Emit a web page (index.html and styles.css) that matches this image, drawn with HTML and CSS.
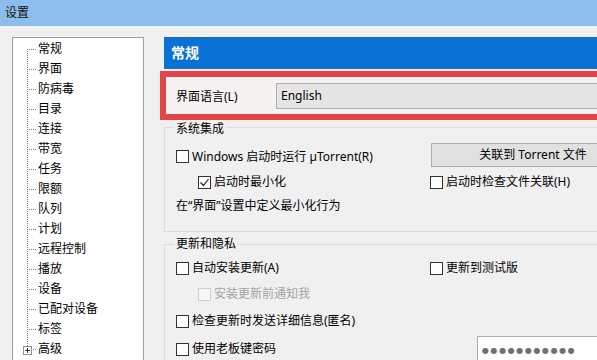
FILE: index.html
```html
<!DOCTYPE html>
<html lang="zh-CN">
<head>
    <meta charset="UTF-8">
    <meta name="viewport" content="width=device-width, initial-scale=1.0">
    <title>设置</title>
    <link rel="stylesheet" href="styles.css">
</head>
<body>
    <div class="titlebar">设置</div>

    <div class="main">
        <ul class="tree">
            <li class="first"><span class="branch"></span>常规</li>
            <li><span class="branch"></span>界面</li>
            <li><span class="branch"></span>防病毒</li>
            <li><span class="branch"></span>目录</li>
            <li><span class="branch"></span>连接</li>
            <li><span class="branch"></span>带宽</li>
            <li><span class="branch"></span>任务</li>
            <li><span class="branch"></span>限额</li>
            <li><span class="branch"></span>队列</li>
            <li><span class="branch"></span>计划</li>
            <li><span class="branch"></span>远程控制</li>
            <li><span class="branch"></span>播放</li>
            <li><span class="branch"></span>设备</li>
            <li><span class="branch"></span>已配对设备</li>
            <li><span class="branch"></span>标签</li>
            <li class="last">
                <span class="branch">
                    <svg class="expander" width="9" height="9" viewBox="0 0 9 9">
                        <rect x="0.5" y="0.5" width="8" height="8" fill="#fff" stroke="#919191"/>
                        <path d="M2 4.5h5M4.5 2v5" stroke="#333" stroke-width="1"/>
                    </svg>
                </span>高级
            </li>
        </ul>

        <div class="panel">
            <div class="header">常规</div>

            <div class="lang-row">
                <span class="lang-label">界面语言(L)</span>
                <div class="select">English</div>
            </div>

            <fieldset class="group group-sys">
                <legend>系统集成</legend>
                <div class="row row-a">
                    <label class="check nudge"><span class="box"></span>Windows 启动时运行 µTorrent(R)</label>
                    <div class="button">关联到 Torrent 文件</div>
                </div>
                <div class="row row-b">
                    <label class="check indent">
                        <span class="box">
                            <svg width="11" height="11" viewBox="0 0 11 11"><path d="M1.5 5.5l3 3 5-6.5" fill="none" stroke="#222" stroke-width="1.2"/></svg>
                        </span>启动时最小化
                    </label>
                    <label class="check"><span class="box"></span>启动时检查文件关联(H)</label>
                </div>
                <div class="row row-c">
                    <span class="note">在“界面”设置中定义最小化行为</span>
                </div>
            </fieldset>

            <fieldset class="group group-upd">
                <legend>更新和隐私</legend>
                <div class="row r26">
                    <label class="check"><span class="box"></span>自动安装更新(A)</label>
                    <label class="check"><span class="box"></span>更新到测试版</label>
                </div>
                <div class="row r26">
                    <label class="check indent disabled"><span class="box"></span>安装更新前通知我</label>
                </div>
                <div class="row r28">
                    <label class="check"><span class="box"></span>检查更新时发送详细信息(匿名)</label>
                </div>
                <div class="row r28">
                    <label class="check"><span class="box"></span>使用老板键密码</label>
                    <div class="password"><span class="dots">●●●●●●●●●●●</span></div>
                </div>
            </fieldset>
        </div>
    </div>
</body>
</html>
```

FILE: styles.css
```css
html, body {
    margin: 0;
    height: 100%;
    overflow: hidden;
}

body {
    background-color: #f0f0f0;
    font-family: "Noto Sans", "Noto Sans CJK SC", sans-serif;
    font-size: 12px;
    color: #000;
}

.titlebar {
    height: 26px;
    line-height: 25px;
    padding-left: 5px;
    background-color: #8dbdea;
    color: #111;
}

.main {
    display: flex;
    gap: 16px;
    height: 334px;
    box-sizing: border-box;
    padding: 11px 0 0 12px;
    overflow: hidden;
}

/* tree on the left */
.tree {
    list-style: none;
    margin: 0;
    width: 132px;
    height: 340px;
    flex-shrink: 0;
    padding: 1px 0 0 14px;
    box-sizing: border-box;
    background-color: #fff;
    border: 1px solid #a0a0a0;
}

.tree li {
    display: flex;
    align-items: center;
    height: 20px;
    line-height: 20px;
}

.branch {
    display: flex;
    align-items: center;
    align-self: stretch;
    width: 10px;
    margin-right: 1px;
    background-image:
        repeating-linear-gradient(to right, #7d7d7d 0 1px, transparent 1px 2px),
        repeating-linear-gradient(to bottom, #7d7d7d 0 1px, transparent 1px 2px);
    background-size: 100% 1px, 1px 100%;
    background-position: 0 10px, 0 0;
    background-repeat: no-repeat;
}

.tree .first .branch {
    background-size: 100% 1px, 1px 10px;
    background-position: 0 10px, 0 10px;
}

.tree .last .branch {
    background-size: 100% 1px, 1px 10px;
    background-position: 0 10px, 0 0;
}

.expander {
    margin-left: -4px;
    margin-top: 3px;
}

/* right side */
.panel {
    flex: 1;
    min-width: 0;
    overflow: hidden;
}

.header {
    margin-left: 4px;
    height: 32px;
    box-sizing: border-box;
    line-height: 29px;
    padding-left: 7px;
    background-color: #0a72d6;
    border-top: 1px solid #2a6aa8;
    border-bottom: 1px solid #2a6aa8;
    color: #fff;
    font-size: 14px;
    font-weight: bold;
}

.lang-row {
    display: flex;
    align-items: center;
    width: 480px;
    margin: 2px 0 0 0;
    padding: 6px 0 5px 10px;
    border: 6px solid #e54444;
    border-right: 0;
    background-color: #f6f2f2;
}

.lang-label {
    width: 100px;
    flex-shrink: 0;
}

.select {
    flex: 1;
    height: 26px;
    box-sizing: border-box;
    line-height: 24px;
    padding-left: 4px;
    background-color: #e5e5e5;
    border: 1px solid #acacac;
    border-right: 0;
}

.group {
    margin: 0 0 0 4px;
    width: 480px;
    min-width: 0;
    border: 1px solid #dcdcdc;
    border-right: 0;
    padding: 8px 0 16px 11px;
}

.group legend {
    padding: 0 2px;
    margin-left: -2px;
    line-height: 12px;
}

.group-sys legend {
    padding-top: 2px;
    line-height: 13px;
}

.group-upd {
    margin-top: 6px;
    padding: 5px 0 0 11px;
}

.row {
    display: grid;
    grid-template-columns: 254px 1fr;
    align-items: center;
}

.row-a { height: 24px; }
.row-b { height: 30px; }
.row-c { height: 18px; }
.r26 { height: 26px; }
.r28 { height: 28px; }

.check {
    display: flex;
    align-items: center;
    gap: 3px;
    line-height: 16px;
    white-space: nowrap;
}

.nudge {
    margin-top: 3px;
}

.indent {
    margin-left: 22px;
}

.box {
    display: flex;
    align-items: center;
    justify-content: center;
    width: 13px;
    height: 13px;
    box-sizing: border-box;
    background-color: #fff;
    border: 1px solid #333;
    flex-shrink: 0;
}

.disabled {
    color: #a3a3a3;
}

.disabled .box {
    border-color: #cfcfcf;
    background-color: #f7f7f7;
}

.note {
    white-space: nowrap;
    line-height: 16px;
}

.button {
    margin-left: 1px;
    width: 204px;
    height: 24px;
    box-sizing: border-box;
    line-height: 22px;
    text-align: center;
    background-color: #e1e1e1;
    border: 1px solid #adadad;
    white-space: nowrap;
}

.password {
    align-self: start;
    margin: 1px 0 0 47px;
    width: 160px;
    height: 27px;
    box-sizing: border-box;
    background-color: #fff;
    border: 1px solid #abadb3;
    padding-left: 4px;
    line-height: 24px;
}

.dots {
    font-family: "DejaVu Sans", sans-serif;
    font-size: 8px;
    color: #707070;
    letter-spacing: 1.6px;
}
```
